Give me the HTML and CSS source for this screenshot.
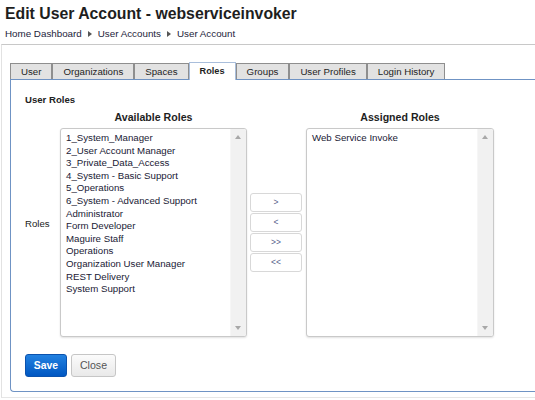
FILE: index.html
```html
<!DOCTYPE html>
<html>
<head>
<meta charset="utf-8">
<link rel="stylesheet" href="styles.css">
</head>
<body>
<div class="header">
  <h1 class="title">Edit User Account - webserviceinvoker</h1>
  <div class="crumbs">
    <span class="crumb">Home Dashboard</span><span class="sep"></span>
    <span class="crumb">User Accounts</span><span class="sep"></span>
    <span class="crumb">User Account</span>
  </div>
</div>
<div class="content">
  <div class="tabs">
    <div class="tab">User</div>
    <div class="tab">Organizations</div>
    <div class="tab">Spaces</div>
    <div class="tab active">Roles</div>
    <div class="tab">Groups</div>
    <div class="tab">User Profiles</div>
    <div class="tab">Login History</div>
  </div>
  <div class="panel">
    <div class="section-title">User Roles</div>
    <div class="roles">
      <div class="label">Roles</div>
      <div class="col avail">
        <div class="col-head">Available Roles</div>
        <div class="listbox">
          <div class="items">
            <div class="item">1_System_Manager</div>
            <div class="item">2_User Account Manager</div>
            <div class="item">3_Private_Data_Access</div>
            <div class="item">4_System - Basic Support</div>
            <div class="item">5_Operations</div>
            <div class="item">6_System - Advanced Support</div>
            <div class="item">Administrator</div>
            <div class="item">Form Developer</div>
            <div class="item">Maguire Staff</div>
            <div class="item">Operations</div>
            <div class="item">Organization User Manager</div>
            <div class="item">REST Delivery</div>
            <div class="item">System Support</div>
          </div>
          <div class="scroll"><span class="arrow up"></span><span class="arrow down"></span></div>
        </div>
      </div>
      <div class="col mid">
        <div class="col-head"></div>
        <div class="btn-area">
          <div class="btns">
            <div class="mv">&gt;</div>
            <div class="mv">&lt;</div>
            <div class="mv">&gt;&gt;</div>
            <div class="mv">&lt;&lt;</div>
          </div>
        </div>
      </div>
      <div class="col assigned">
        <div class="col-head">Assigned Roles</div>
        <div class="listbox">
          <div class="items">
            <div class="item">Web Service Invoke</div>
          </div>
          <div class="scroll"><span class="arrow up"></span><span class="arrow down"></span></div>
        </div>
      </div>
    </div>
    <div class="actions">
      <div class="btn save">Save</div>
      <div class="btn close">Close</div>
    </div>
  </div>
</div>
</body>
</html>
```

FILE: styles.css
```css
html, body {
  margin: 0;
  padding: 0;
  overflow: hidden;
  background: #fff;
  width: 535px;
  height: 400px;
}
body {
  font-family: "Liberation Sans", Arial, sans-serif;
  color: #222;
}
.header {
  padding: 5px 5px 4px 5px;
}
.title {
  margin: 0;
  font-size: 15.8px;
  line-height: 18px;
  font-weight: bold;
  color: #1e1e1e;
}
.crumbs {
  margin-top: 5px;
  font-size: 9.8px;
  line-height: 12px;
  color: #23233a;
  display: flex;
  align-items: center;
  white-space: nowrap;
}
.sep {
  width: 0;
  height: 0;
  border-top: 3px solid transparent;
  border-bottom: 3px solid transparent;
  border-left: 4px solid #555;
  margin: 0 6px 0 6px;
}
.content {
  margin-left: 1px;
  border-top: 1px solid #c8c8c8;
  border-left: 1px solid #e2e2e2;
  border-bottom: 1px solid #e6e6e6;
  padding: 18px 0 5px 8px;
  width: 525px;
}
.tabs {
  display: flex;
  align-items: flex-end;
  height: 16px;
  position: relative;
  z-index: 1;
}
.tab {
  height: 15px;
  line-height: 15px;
  padding: 0 10px;
  font-size: 9.7px;
  color: #1e1e1e;
  background: #e2e2e2;
  border: 1px solid #8e8e8e;
  border-bottom: none;
  white-space: nowrap;
}
.tab.active {
  background: #fff;
  font-weight: bold;
  font-size: 9.2px;
  height: 17px;
  line-height: 17px;
  margin-bottom: -1px;
  border-color: #a9bedb;
}
.panel {
  border: 1px solid #6f93c4;
  border-right: none;
  border-radius: 0 0 0 4px;
  padding: 14px 0 14px 14px;
}
.section-title {
  font-size: 9.6px;
  line-height: 12px;
  font-weight: bold;
}
.roles {
  margin-top: 5px;
  display: flex;
  align-items: stretch;
}
.label {
  width: 35px;
  font-size: 9.6px;
  line-height: 12px;
  display: flex;
  align-items: center;
  padding-bottom: 1px;
}
.col {
  display: flex;
  flex-direction: column;
}
.col-head {
  height: 13px;
  line-height: 13px;
  font-size: 10.6px;
  font-weight: bold;
  text-align: center;
  margin-bottom: 4px;
  color: #1e1e1e;
}
.avail { width: 187px; }
.assigned { width: 188px; }
.mid { width: 52px; margin: 0 4px 0 3px; }
.listbox {
  height: 207px;
  border: 1px solid #c9c9c9;
  border-radius: 3px;
  box-shadow: 0 1px 2px rgba(0, 0, 0, 0.12);
  display: flex;
  background: #fff;
  overflow: hidden;
}
.items {
  flex: 1;
  padding: 3px 0 0 5px;
}
.item {
  font-size: 9.7px;
  line-height: 12.6px;
  color: #1a1a35;
  white-space: nowrap;
}
.scroll {
  width: 15px;
  background: #f1f1f1;
  border-left: 1px solid #f6f6f6;
  position: relative;
}
.arrow {
  position: absolute;
  left: 4px;
  width: 0;
  height: 0;
  border-left: 3.5px solid transparent;
  border-right: 3.5px solid transparent;
}
.arrow.up {
  top: 6px;
  border-bottom: 4px solid #a8a8a8;
}
.arrow.down {
  bottom: 6px;
  border-top: 4px solid #a8a8a8;
}
.btn-area {
  height: 209px;
  display: flex;
  align-items: center;
}
.btns {
  display: flex;
  flex-direction: column;
  gap: 1px;
  width: 52px;
  margin-top: -1px;
}
.mv {
  height: 17px;
  line-height: 17px;
  border: 1px solid #d8d8d8;
  border-radius: 3px;
  background: #fff;
  text-align: center;
  font-size: 8.5px;
  color: #56608a;
}
.actions {
  margin-top: 17px;
  display: flex;
  gap: 4px;
}
.btn {
  height: 21px;
  line-height: 21px;
  border-radius: 3px;
  text-align: center;
  font-size: 10.6px;
}
.save {
  width: 40px;
  background: linear-gradient(#2281e0, #0057c2);
  border: 1px solid #0b52ad;
  color: #fff;
  font-weight: bold;
  font-size: 10.4px;
}
.close {
  width: 43px;
  background: linear-gradient(#fbfbfb, #e9e9e9);
  border: 1px solid #c6c6c6;
  color: #555;
}
```
